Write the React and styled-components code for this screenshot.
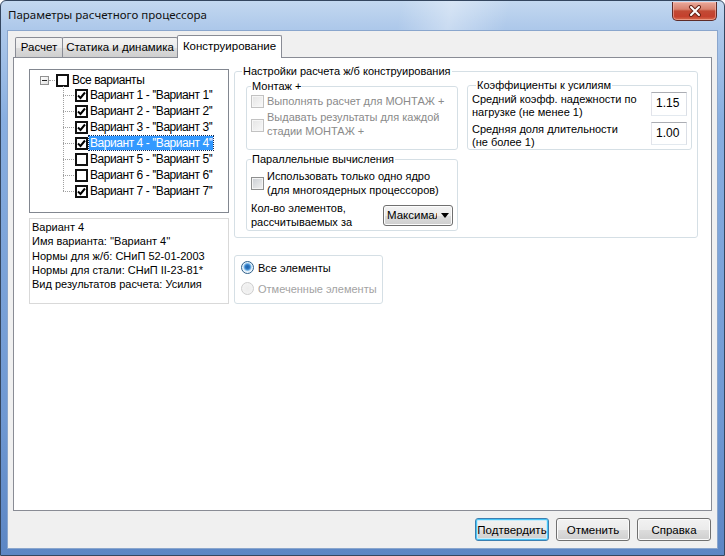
import React from "react";
import styled, { createGlobalStyle, css } from "styled-components";

const Global = createGlobalStyle`
  html, body { margin: 0; padding: 0; background: #ffffff; }
  body {
    font-family: "Liberation Sans", Arial, sans-serif;
    font-size: 11px;
    color: #000;
  }
  * { box-sizing: border-box; }
`;

const Win = styled.div`
  width: 725px;
  height: 556px;
  display: flex;
  flex-direction: column;
  border: 1px solid #34465f;
  border-radius: 6px 6px 0 0;
  background: linear-gradient(180deg, #c3d8f0 0px, #adc8ea 28px, #88aee0 120px, #6f98d2 420px, #5c86c4 100%);
  overflow: hidden;
`;

const TitleBar = styled.div`
  height: 29px;
  flex: none;
  display: flex;
  align-items: flex-start;
  padding: 0 7px 0 7px;
  background: linear-gradient(100deg, rgba(255,255,255,0) 0%, rgba(255,255,255,0) 55%, rgba(255,255,255,0.35) 62%, rgba(255,255,255,0) 70%);
`;

const Title = styled.div`
  font-family: "Noto Sans", "Open Sans", sans-serif;
  font-size: 11.5px;
  line-height: 16px;
  margin-top: 6px;
  color: #111;
`;

const CloseBtn = styled.div`
  margin-left: auto;
  margin-top: 1px;
  width: 45px;
  height: 19px;
  border: 1px solid #5e2b28;
  border-top: none;
  border-radius: 0 0 5px 5px;
  background: linear-gradient(180deg, #e9a99b 0%, #d9826f 40%, #c24a34 50%, #c4402d 80%, #d86c4d 100%);
  box-shadow: inset 0 0 0 1px rgba(255, 200, 190, 0.5);
  display: flex;
  align-items: center;
  justify-content: center;
`;

const Client = styled.div`
  flex: 1;
  margin: 0 6px 6px 6px;
  border: 1px solid #8aa6cd;
  background: #f0f0f0;
  display: flex;
  flex-direction: column;
  padding: 4px 5px 7px 5px;
`;

const TabStrip = styled.div`
  height: 23px;
  display: flex;
  align-items: flex-end;
  margin-left: 2px;
  margin-bottom: -1px;
  position: relative;
  z-index: 1;
`;

const Tab = styled.div`
  width: ${(p) => p.$w}px;
  height: 20px;
  margin-bottom: 1px;
  margin-left: -1px;
  border: 1px solid #898c95;
  border-bottom: none;
  border-radius: 2px 2px 0 0;
  background: linear-gradient(180deg, #f3f3f3 0%, #ebebeb 50%, #dddddd 51%, #cfcfcf 100%);
  text-align: center;
  line-height: 19px;
  font-size: 11.5px;
  white-space: nowrap;
  &:first-child { margin-left: 0; }
  ${(p) =>
    p.$active &&
    css`
      height: 23px;
      margin-bottom: 0;
      background: #ffffff;
      line-height: 20px;
    `}
`;

const Panel = styled.div`
  height: 454px;
  border: 1px solid #898c95;
  background: #ffffff;
  display: flex;
  align-items: flex-start;
  gap: 5px;
  padding: 6px 0 0 15px;
`;

const LeftCol = styled.div`
  width: 200px;
  margin-top: 5px;
  display: flex;
  flex-direction: column;
  gap: 5px;
`;

const TreeBox = styled.div`
  height: 144px;
  border: 1px solid #828790;
  background: #fff;
  padding: 2px 0 0 10px;
`;

const TreeRow = styled.div`
  height: 16px;
  display: flex;
  align-items: center;
  font-size: 12px;
`;

const Expander = styled.span`
  width: 9px;
  height: 9px;
  border: 1px solid #919191;
  background: linear-gradient(135deg, #ffffff, #e0e0e0);
  display: flex;
  align-items: center;
  justify-content: center;
  flex: none;
  &::after {
    content: "";
    width: 5px;
    height: 1px;
    background: #222;
  }
`;

const Connector = styled.span`
  width: ${(p) => p.$w}px;
  border-top: 1px dotted #a0a0a0;
  flex: none;
  margin-right: 1px;
`;

const Children = styled.div`
  position: relative;
  margin-left: 23px;
  margin-top: -1px;
  &::before {
    content: "";
    position: absolute;
    left: 0;
    top: -1px;
    bottom: 8px;
    border-left: 1px dotted #a0a0a0;
  }
`;

const TreeCheck = styled.span`
  width: 13px;
  height: 13px;
  border: 2px solid #111;
  background: #fff;
  flex: none;
  display: flex;
  align-items: center;
  justify-content: center;
`;

const TreeLabel = styled.span`
  margin-left: ${(p) => p.$ml}px;
  padding: 0 1px;
  line-height: 14px;
  white-space: nowrap;
  letter-spacing: -0.45px;
  ${(p) =>
    p.$selected &&
    css`
      background: #3399ff;
      color: #fff;
      outline: 1px dotted #0a2a5a;
    `}
`;

const InfoBox = styled.div`
  height: 86px;
  border: 1px solid #d9d9d9;
  background: #fff;
  padding: 1px 2px;
  line-height: 14.3px;
  white-space: nowrap;
`;

const RightCol = styled.div`
  width: 464px;
  display: flex;
  flex-direction: column;
`;

const Group = styled.fieldset`
  margin: 0;
  padding: 0;
  min-width: 0;
  border: 1px solid #d5dfe5;
  border-radius: 3px;
  width: ${(p) => p.$w}px;
  flex: none;
  ${(p) => p.$mt && css`margin-top: ${p.$mt}px;`}
`;

const Legend = styled.legend`
  margin-left: ${(p) => p.$ml}px;
  padding: 0 1px;
  line-height: 14px;
  font-size: 11px;
  white-space: nowrap;
`;

const SettingsInner = styled.div`
  height: 159px;
  padding: 1px 5px 6px 11px;
  display: flex;
  gap: 9px;
  align-items: flex-start;
`;

const Stack = styled.div`
  display: flex;
  flex-direction: column;
  gap: 2px;
`;

const GroupInner = styled.div`
  height: ${(p) => p.$h}px;
  padding: ${(p) => p.$pad};
  display: flex;
  flex-direction: column;
  gap: ${(p) => p.$gap || 0}px;
`;

const CheckRow = styled.div`
  display: flex;
  align-items: center;
  gap: 3px;
  line-height: 14px;
  white-space: nowrap;
  color: ${(p) => (p.$disabled ? "#8a8a8a" : "#000")};
`;

const Box = styled.span`
  width: 13px;
  height: 13px;
  flex: none;
  border: 1px solid ${(p) => (p.$disabled ? "#c2c2c2" : "#8e8f8f")};
  background: ${(p) =>
    p.$disabled
      ? "linear-gradient(135deg, #e4e4e4, #f9f9f9)"
      : "linear-gradient(135deg, #c9cdd2, #f1f1f1)"};
  box-shadow: inset 0 0 0 1px ${(p) => (p.$disabled ? "#f6f6f6" : "#f4f4f4")};
  margin-top: ${(p) => p.$mt || 0}px;
`;

const SplitRow = styled.div`
  display: flex;
  align-items: center;
  justify-content: space-between;
  line-height: 14px;
  white-space: nowrap;
`;

const Combo = styled.div`
  width: 70px;
  height: 21px;
  border: 1px solid #707070;
  border-radius: 3px;
  background: linear-gradient(180deg, #f2f2f2 0%, #ebebeb 50%, #dddddd 51%, #cfcfcf 100%);
  box-shadow: inset 0 0 0 1px #fcfcfc;
  display: flex;
  align-items: center;
  padding: 0 0 0 3px;
  overflow: hidden;
  font-size: 11.5px;
`;

const ComboText = styled.span`
  width: 50px;
  overflow: hidden;
  white-space: nowrap;
  flex: none;
`;

const ComboArrow = styled.span`
  margin-left: 4px;
  width: 0;
  height: 0;
  border-left: 4px solid transparent;
  border-right: 4px solid transparent;
  border-top: 5px solid #000;
`;

const CoefInner = styled.div`
  height: 57px;
  padding: 0 4px 0 4px;
  display: flex;
  flex-direction: column;
`;

const CoefRow = styled.div`
  height: ${(p) => p.$h}px;
  display: flex;
  justify-content: space-between;
  align-items: flex-start;
`;

const CoefText = styled.div`
  padding-top: 1px;
  line-height: 13px;
  white-space: nowrap;
`;

const NumInput = styled.div`
  width: 36px;
  height: ${(p) => p.$h}px;
  border: 1px solid #abadb3;
  border-left-color: #e2e3ea;
  border-right-color: #dbdfe6;
  border-bottom-color: #e3e9ef;
  background: #fff;
  padding: 3px 0 0 4px;
  line-height: 14px;
  font-size: 12px;
`;

const RadioGroup = styled.div`
  margin-top: 17px;
  width: 149px;
  height: 49px;
  border: 1px solid #d5dfe5;
  border-radius: 3px;
  padding: 1px 0 0 6px;
`;

const RadioRow = styled.div`
  height: 21px;
  display: flex;
  align-items: center;
  gap: 4px;
  white-space: nowrap;
  color: ${(p) => (p.$disabled ? "#a3a3a3" : "#000")};
`;

const RadioDot = styled.span`
  width: 13px;
  height: 13px;
  border-radius: 50%;
  flex: none;
  ${(p) =>
    p.$checked
      ? css`
          border: 1px solid #2c5f8a;
          background: radial-gradient(circle at 50% 45%, #1f5fa6 0, #2d79c5 2.2px, #79b6e6 3.4px, #dfeefa 4.4px, #f4f8fc 6px);
        `
      : css`
          border: 1px solid #cdcdcd;
          background: radial-gradient(circle, #ececec 0, #f4f4f4 6px);
        `}
`;

const ButtonRow = styled.div`
  margin-top: 7px;
  display: flex;
  justify-content: flex-end;
  gap: 7px;
  padding-right: 1px;
`;

const Button = styled.div`
  width: 74px;
  height: 23px;
  border: 1px solid ${(p) => (p.$default ? "#3c7fb1" : "#707070")};
  border-radius: 3px;
  background: linear-gradient(180deg, #f2f2f2 0%, #ebebeb 50%, #dddddd 51%, #cfcfcf 100%);
  box-shadow: ${(p) =>
    p.$default ? "inset 0 0 0 1px #48c4f5, inset 0 0 0 2px #c8ecfb" : "inset 0 0 0 1px #fbfbfb"};
  display: flex;
  align-items: center;
  justify-content: center;
  line-height: 14px;
  font-size: 11.5px;
`;

const Check = () => (
  <svg width="9" height="9" viewBox="0 0 9 9">
    <path d="M1 4.5 L3.5 7 L8 1.5" fill="none" stroke="#000" strokeWidth="2" />
  </svg>
);

const variants = [
  { n: 1, c: true },
  { n: 2, c: true },
  { n: 3, c: true },
  { n: 4, c: true, s: true },
  { n: 5, c: false },
  { n: 6, c: false },
  { n: 7, c: true },
];

export default function App() {
  return (
    <>
      <Global />
      <Win>
        <TitleBar>
          <Title>Параметры расчетного процессора</Title>
          <CloseBtn>
            <svg width="14" height="12" viewBox="0 0 14 12">
              <path d="M3 2 L11 10 M11 2 L3 10" stroke="#6a2418" strokeWidth="4" strokeLinecap="round" />
              <path d="M3 2 L11 10 M11 2 L3 10" stroke="#ffffff" strokeWidth="2" strokeLinecap="round" />
            </svg>
          </CloseBtn>
        </TitleBar>
        <Client>
          <TabStrip>
            <Tab $w={48}>Расчет</Tab>
            <Tab $w={116}>Статика и динамика</Tab>
            <Tab $w={105} $active>Конструирование</Tab>
          </TabStrip>
          <Panel>
            <LeftCol>
              <TreeBox>
                <TreeRow>
                  <Expander />
                  <Connector $w={6} />
                  <TreeCheck />
                  <TreeLabel $ml={2}>Все варианты</TreeLabel>
                </TreeRow>
                <Children>
                  {variants.map((v) => (
                    <TreeRow key={v.n}>
                      <Connector $w={11} />
                      <TreeCheck>{v.c && <Check />}</TreeCheck>
                      <TreeLabel $ml={1} $selected={v.s}>
                        Вариант {v.n} - ''Вариант {v.n}''
                      </TreeLabel>
                    </TreeRow>
                  ))}
                </Children>
              </TreeBox>
              <InfoBox>
                <div>Вариант 4</div>
                <div>Имя варианта: ''Вариант 4''</div>
                <div>Нормы для ж/б: СНиП 52-01-2003</div>
                <div>Нормы для стали: СНиП II-23-81*</div>
                <div>Вид результатов расчета: Усилия</div>
              </InfoBox>
            </LeftCol>
            <RightCol>
              <Group $w={464}>
                <Legend $ml={7}>Настройки расчета ж/б конструирования</Legend>
                <SettingsInner>
                  <Stack>
                    <Group $w={212}>
                      <Legend $ml={4}>Монтаж +</Legend>
                      <GroupInner $h={56} $pad="1px 4px 0 4px" $gap={2}>
                        <CheckRow $disabled>
                          <Box $disabled $mt={1} />
                          <span>Выполнять расчет для МОНТАЖ +</span>
                        </CheckRow>
                        <CheckRow $disabled>
                          <Box $disabled $mt={2} />
                          <span>
                            Выдавать результаты для каждой
                            <br />
                            стадии МОНТАЖ +
                          </span>
                        </CheckRow>
                      </GroupInner>
                    </Group>
                    <Group $w={212}>
                      <Legend $ml={4}>Параллельные вычисления</Legend>
                      <GroupInner $h={64} $pad="3px 4px 0 4px" $gap={4}>
                        <CheckRow>
                          <Box />
                          <span>
                            Использовать только одно ядро
                            <br />
                            (для многоядерных процессоров)
                          </span>
                        </CheckRow>
                        <SplitRow>
                          <span>
                            Кол-во элементов,
                            <br />
                            рассчитываемых за
                          </span>
                          <Combo>
                            <ComboText>Максимальное</ComboText>
                            <ComboArrow />
                          </Combo>
                        </SplitRow>
                      </GroupInner>
                    </Group>
                  </Stack>
                  <Group $w={225} $mt={-1}>
                    <Legend $ml={8}>Коэффициенты к усилиям</Legend>
                    <CoefInner>
                      <CoefRow $h={30}>
                        <CoefText>
                          Средний коэфф. надежности по
                          <br />
                          нагрузке (не менее 1)
                        </CoefText>
                        <NumInput $h={24}>1.15</NumInput>
                      </CoefRow>
                      <CoefRow $h={27}>
                        <CoefText>
                          Средняя доля длительности
                          <br />
                          (не более 1)
                        </CoefText>
                        <NumInput $h={23}>1.00</NumInput>
                      </CoefRow>
                    </CoefInner>
                  </Group>
                </SettingsInner>
              </Group>
              <RadioGroup>
                <RadioRow>
                  <RadioDot $checked />
                  <span>Все элементы</span>
                </RadioRow>
                <RadioRow $disabled>
                  <RadioDot />
                  <span>Отмеченные элементы</span>
                </RadioRow>
              </RadioGroup>
            </RightCol>
          </Panel>
          <ButtonRow>
            <Button $default>Подтвердить</Button>
            <Button>Отменить</Button>
            <Button>Справка</Button>
          </ButtonRow>
        </Client>
      </Win>
    </>
  );
}
